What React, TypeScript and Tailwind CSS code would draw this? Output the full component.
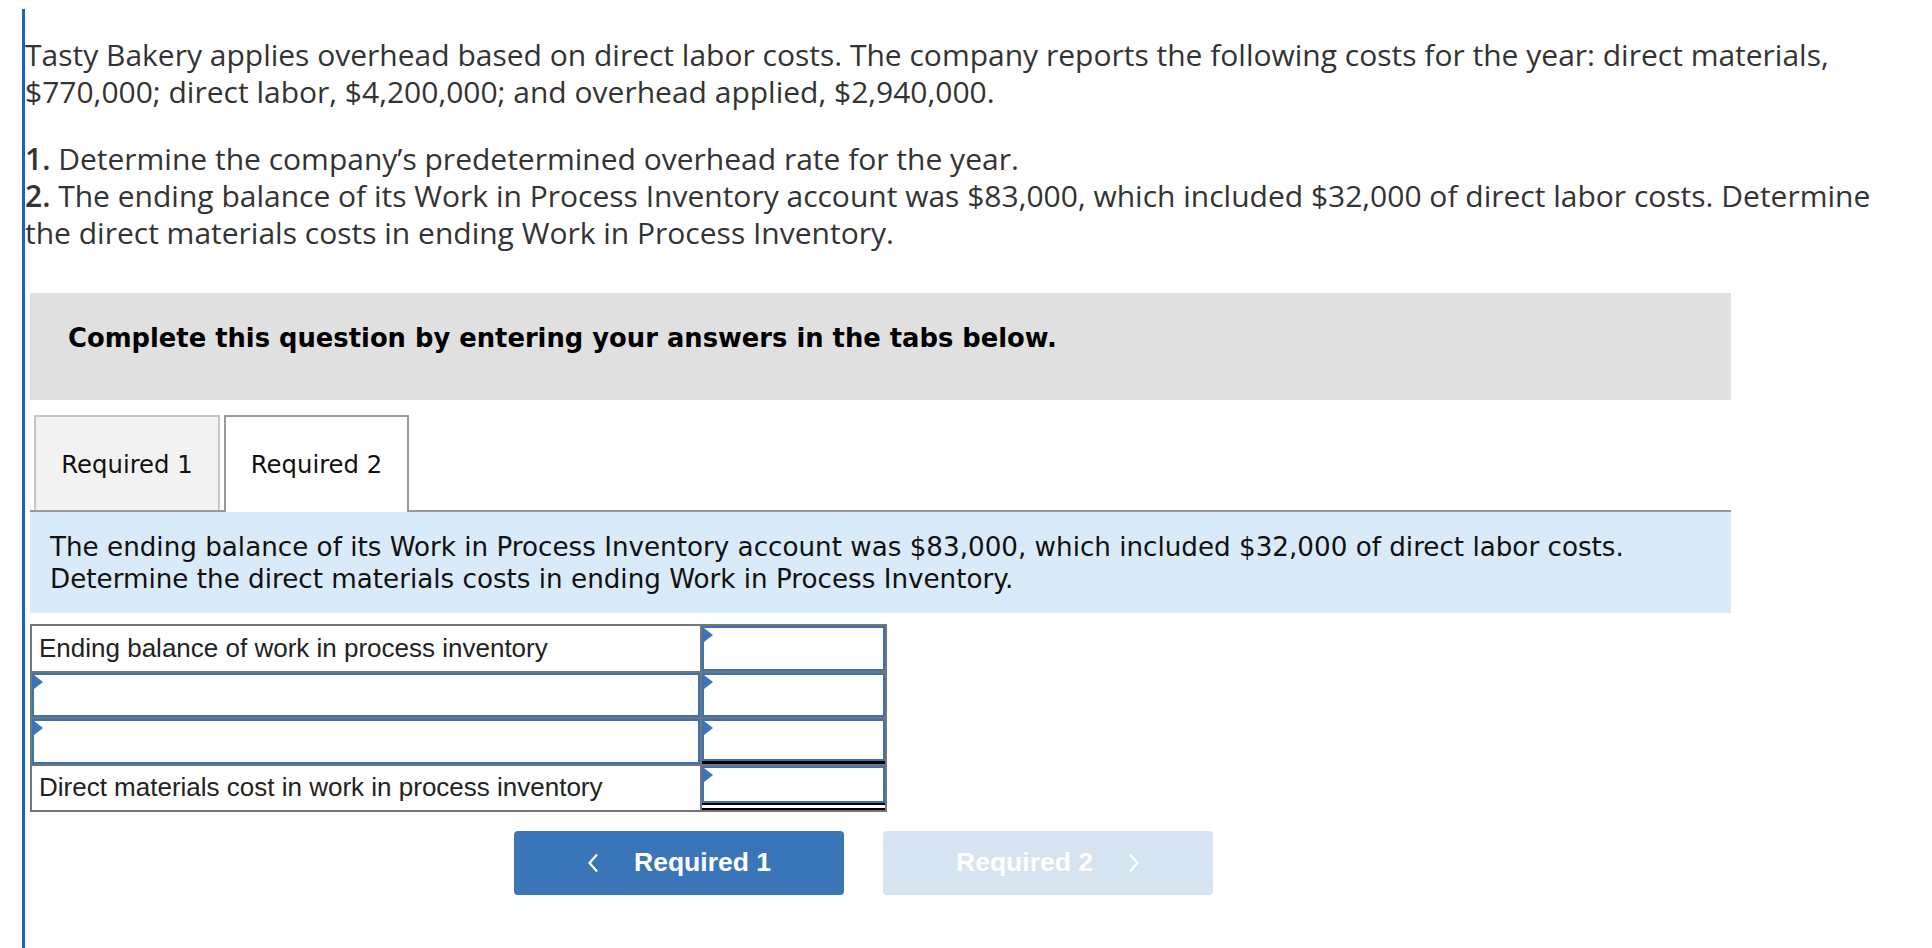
import React from 'react';

const Flag: React.FC = () => (
  <svg className="absolute left-0 top-0" width="10" height="14" viewBox="0 0 10 14">
    <polygon points="0,0 9,7 0,14" fill="#3a76b8" />
  </svg>
);

const InputCell: React.FC<{ under?: 'single' | 'double' }> = ({ under }) => (
  <div
    className={
      'bg-white h-[44.5px] ' +
      (under === 'single' ? 'border-b-[3px] border-black ' : '') +
      (under === 'double' ? 'border-b-[7px] border-double border-black ' : '')
    }
  >
    <div className="relative h-full border-2 border-[#3a73b5] bg-white">
      <Flag />
    </div>
  </div>
);

const LabelCell: React.FC<{ text: string }> = ({ text }) => (
  <div className="bg-white h-[44.5px] flex items-center pl-[7px] text-[26px] text-[#222] font-['Liberation_Sans',Arial,sans-serif]">
    {text}
  </div>
);

const App: React.FC = () => {
  return (
    <div className="min-h-screen bg-white pt-[9px]">
      <div className="ml-[22px] min-h-[939px] border-l-[3px] border-[#1762c9]">
        <div className="pt-[27px] text-[30px] leading-[37px] text-[#333] font-['Open_Sans',sans-serif]">
          <p>
            Tasty Bakery applies overhead based on direct labor costs. The company reports the following costs for the year: direct materials,
            <br />
            $770,000; direct labor, $4,200,000; and overhead applied, $2,940,000.
          </p>
          <p className="mt-[30px]">
            <span className="font-semibold">1.</span> Determine the company’s predetermined overhead rate for the year.
            <br />
            <span className="font-semibold">2.</span> The ending balance of its Work in Process Inventory account was $83,000, which included $32,000 of direct labor costs. Determine
            <br />
            the direct materials costs in ending Work in Process Inventory.
          </p>
        </div>

        <div className="ml-[5px] mt-[42px] w-[1701px] font-['DejaVu_Sans',Verdana,sans-serif]">
          <div className="h-[107px] bg-[#e0e0e0] pt-[30px] pl-[38px]">
            <span className="text-[25.8px] leading-[31px] font-bold text-black">
              Complete this question by entering your answers in the tabs below.
            </span>
          </div>

          <div className="mt-[15px] flex gap-[4px] pl-[4px] border-b-2 border-[#999]">
            <div className="w-[186px] h-[95px] bg-[#f2f2f2] border-2 border-b-0 border-[#c6c6c6] flex items-center justify-center pt-[3px] text-[24.3px] text-[#111]">
              Required 1
            </div>
            <div className="w-[185px] h-[97px] -mb-[2px] bg-white border-2 border-b-0 border-[#9a9a9a] flex items-center justify-center pt-[1px] text-[24.3px] text-[#111]">
              Required 2
            </div>
          </div>

          <div className="bg-[#d9eaf8] pt-[19px] pb-[18px] pl-[20px] text-[26.2px] leading-[32px] text-[#111]">
            The ending balance of its Work in Process Inventory account was $83,000, which included $32,000 of direct labor costs.
            <br />
            Determine the direct materials costs in ending Work in Process Inventory.
          </div>

          <div className="mt-[11px] w-[857px] grid grid-cols-[668px_183px] gap-[2px] p-[2px] bg-[#757575]">
            <LabelCell text="Ending balance of work in process inventory" />
            <InputCell />
            <InputCell />
            <InputCell />
            <InputCell />
            <InputCell under="single" />
            <LabelCell text="Direct materials cost in work in process inventory" />
            <InputCell under="double" />
          </div>

          <div className="mt-[19px] ml-[484px] flex gap-[39px] font-['Liberation_Sans',Arial,sans-serif]">
            <button className="w-[330px] h-[64px] rounded-[4px] bg-[#3a76b7] text-white flex items-center justify-center gap-[35px]">
              <svg width="12" height="20" viewBox="0 0 12 20">
                <polyline points="10,1.5 2.5,10 10,18.5" fill="none" stroke="white" strokeWidth="2.2" />
              </svg>
              <span className="text-[26.5px] font-bold">Required 1</span>
            </button>
            <button className="w-[330px] h-[64px] rounded-[4px] bg-[#d6e4f1] text-white flex items-center justify-center gap-[35px]">
              <span className="text-[26.5px] font-bold">Required 2</span>
              <svg width="12" height="20" viewBox="0 0 12 20">
                <polyline points="2,1.5 9.5,10 2,18.5" fill="none" stroke="white" strokeWidth="2.2" />
              </svg>
            </button>
          </div>
        </div>
      </div>
    </div>
  );
};

export default App;
